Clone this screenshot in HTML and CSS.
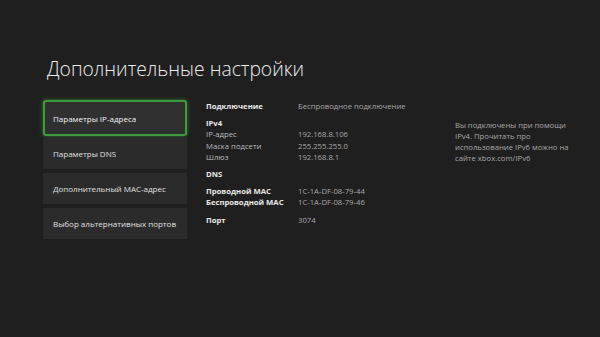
FILE: index.html
```html
<!DOCTYPE html>
<html>
<head>
    <meta charset="UTF-8">
    <title>Дополнительные настройки</title>
    <link rel="stylesheet" href="styles.css">
</head>
<body>
    <div class="screen">
        <h1 class="page-title">Дополнительные настройки</h1>
        <div class="content">
            <div class="menu">
                <div class="menu-item focused">Параметры IP-адреса</div>
                <div class="menu-item">Параметры DNS</div>
                <div class="menu-item">Дополнительный MAC-адрес</div>
                <div class="menu-item">Выбор альтернативных портов</div>
            </div>
            <div class="details">
                <div class="row group">
                    <span class="label strong">Подключение</span>
                    <span class="value">Беспроводное подключение</span>
                </div>
                <div class="row heading">IPv4</div>
                <div class="row">
                    <span class="label">IP-адрес</span>
                    <span class="value">192.168.8.106</span>
                </div>
                <div class="row">
                    <span class="label">Маска подсети</span>
                    <span class="value">255.255.255.0</span>
                </div>
                <div class="row group">
                    <span class="label">Шлюз</span>
                    <span class="value">192.168.8.1</span>
                </div>
                <div class="row heading group">DNS</div>
                <div class="row">
                    <span class="label strong">Проводной MAC</span>
                    <span class="value">1C-1A-DF-08-79-44</span>
                </div>
                <div class="row group">
                    <span class="label strong">Беспроводной MAC</span>
                    <span class="value">1C-1A-DF-08-79-46</span>
                </div>
                <div class="row">
                    <span class="label strong">Порт</span>
                    <span class="value">3074</span>
                </div>
            </div>
            <div class="note">
                Вы подключены при помощи IPv4. Прочитать про использование IPv6 можно на сайте xbox.com/IPv6
            </div>
        </div>
    </div>
</body>
</html>
```

FILE: styles.css
```css
body {
    margin: 0;
    background-color: #1f1f1f;
    color: #e6e6e6;
    font-family: "Open Sans", "Noto Sans", sans-serif;
    width: 600px;
    height: 337px;
    overflow: hidden;
}

.screen {
    padding: 55px 0 0 45px;
}

.page-title {
    margin: 0 0 17px 2px;
    font-size: 19.3px;
    font-weight: 300;
    color: #ededed;
    line-height: 28px;
}

.content {
    display: flex;
    align-items: flex-start;
}

.menu {
    width: 144px;
    display: flex;
    flex-direction: column;
    gap: 4px;
    margin-left: -2px;
}

.menu-item {
    height: 31px;
    background-color: #2b2b2b;
    font-size: 8px;
    color: #e0e0e0;
    display: flex;
    align-items: center;
    padding-left: 10px;
    box-sizing: border-box;
    white-space: nowrap;
}

.menu-item.focused {
    height: 36px;
    border: 2px solid #3f9a3f;
    border-radius: 3px;
    background-color: #303030;
    box-shadow: 0 0 4px rgba(70, 170, 70, 0.6);
    padding-left: 8px;
    color: #f2f2f2;
    margin-bottom: -2px;
}

.details {
    margin-left: 19px;
    width: 230px;
    font-size: 7.7px;
    padding-top: 1px;
}

.row {
    display: flex;
    line-height: 11.2px;
}

.row.group {
    margin-bottom: 6px;
}

.label {
    width: 92px;
    color: #bdbdbd;
}

.label.strong,
.heading {
    font-weight: 700;
    color: #e8e8e8;
}

.value {
    color: #a8a8a8;
}

.note {
    margin-left: 19px;
    margin-top: 20px;
    width: 118px;
    font-size: 7.7px;
    line-height: 11px;
    color: #a8a8a8;
}
```
